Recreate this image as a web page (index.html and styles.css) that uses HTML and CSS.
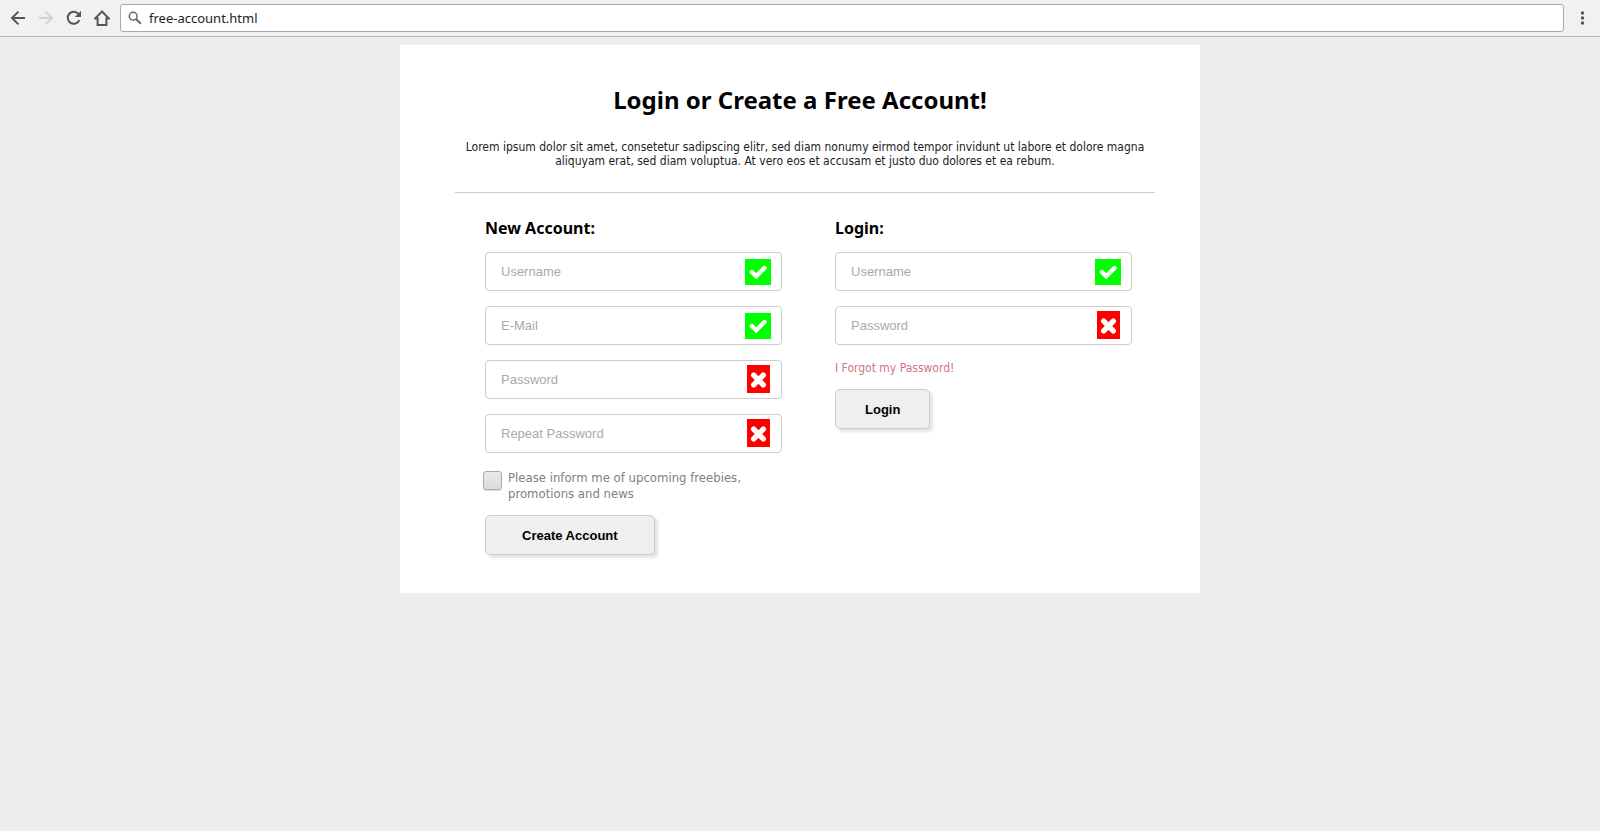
FILE: index.html
```html
<!DOCTYPE html>
<html lang="en">
<head>
<meta charset="utf-8">
<title>free-account.html</title>
<link rel="stylesheet" href="styles.css">
</head>
<body>
<svg class="symbols" aria-hidden="true">
  <symbol id="check" viewBox="0 0 26 26"><path d="M6.800 13 11.200 17.200 19.500 9" fill="none" stroke="#fff" stroke-width="4.400" stroke-linecap="round"/></symbol>
  <symbol id="cross" viewBox="0 0 23 28"><path d="M6.700 10.200 16.300 19.800M16.300 10.200 6.700 19.800" fill="none" stroke="#fff" stroke-width="5.400" stroke-linecap="round"/></symbol>
</svg>
<header class="toolbar">
  <nav class="toolbar-nav" aria-label="Browser">
    <button class="tool" type="button" aria-label="Back"><svg viewBox="0 0 16 16"><path d="M15 8H2.4M8.4 1.6 2 8l6.400 6.400"/></svg></button>
    <button class="tool tool-off" type="button" aria-label="Forward"><svg viewBox="0 0 16 16"><path d="M1 8h12.600M7.600 1.600 14 8l-6.400 6.400"/></svg></button>
    <button class="tool" type="button" aria-label="Reload"><svg viewBox="0 0 16 16"><path d="M13.300 10.100A6 6 0 1 1 12.400 3.900"/><path class="solid" d="M15 .8V7H8.800Z"/></svg></button>
    <button class="tool" type="button" aria-label="Home"><svg viewBox="0 0 16 16"><path d="M8 1.500 1.300 8.400H3.600V15h8.800V8.400h2.300Z"/></svg></button>
  </nav>
  <label class="address">
    <svg class="search" viewBox="0 0 14 14"><circle cx="5.200" cy="5.200" r="3.900"/><path d="m8.200 8.200 4.600 4.600"/></svg>
    <input class="address-input" type="text" value="free-account.html" aria-label="Address">
  </label>
  <button class="tool menu" type="button" aria-label="Menu"><svg viewBox="0 0 16 16"><circle class="solid" cx="8.500" cy="3" r="1.700"/><circle class="solid" cx="8.500" cy="8" r="1.700"/><circle class="solid" cx="8.500" cy="13" r="1.700"/></svg></button>
</header>
<main class="card">
  <h1 class="title">Login or Create a Free Account!</h1>
  <p class="intro">Lorem ipsum dolor sit amet, consetetur sadipscing elitr, sed diam nonumy eirmod tempor invidunt ut labore et dolore magna aliquyam erat, sed diam voluptua. At vero eos et accusam et justo duo dolores et ea rebum.</p>
  <div class="columns">
    <form class="column">
      <h2 class="heading">New Account:</h2>
      <label class="field"><input class="field-input" type="text" placeholder="Username" aria-label="Username"><svg class="mark mark-ok"><use href="#check"/></svg></label>
      <label class="field"><input class="field-input" type="email" placeholder="E-Mail" aria-label="E-Mail"><svg class="mark mark-ok"><use href="#check"/></svg></label>
      <label class="field"><input class="field-input" type="password" placeholder="Password" aria-label="Password"><svg class="mark mark-bad"><use href="#cross"/></svg></label>
      <label class="field"><input class="field-input" type="password" placeholder="Repeat Password" aria-label="Repeat Password"><svg class="mark mark-bad"><use href="#cross"/></svg></label>
      <label class="inform"><input class="tick" type="checkbox"><span>Please inform me of upcoming freebies, promotions and news</span></label>
      <button class="button button-wide" type="button">Create Account</button>
    </form>
    <form class="column">
      <h2 class="heading">Login:</h2>
      <label class="field"><input class="field-input" type="text" placeholder="Username" aria-label="Username"><svg class="mark mark-ok"><use href="#check"/></svg></label>
      <label class="field"><input class="field-input" type="password" placeholder="Password" aria-label="Password"><svg class="mark mark-bad"><use href="#cross"/></svg></label>
      <a class="forgot" href="#">I Forgot my Password!</a>
      <button class="button" type="button">Login</button>
    </form>
  </div>
</main>
</body>
</html>
```
FILE: styles.css
```css
* { box-sizing: border-box; }
body { margin: 0; background: #ededed; color: #000; font-family: "DejaVu Sans Condensed", "DejaVu Sans", sans-serif; font-size: 12px; }
.symbols { display: none; }

.toolbar { display: flex; align-items: center; gap: 8px; height: 37px; padding: 0 8px; background: #f1f1f1; border-bottom: 1px solid #b3b3b3; }
.toolbar-nav { display: flex; gap: 8px; }
.tool { display: flex; align-items: center; justify-content: center; width: 20px; height: 20px; padding: 0; border: 0; background: none; }
.tool svg { width: 16px; height: 16px; fill: none; stroke: #555; stroke-width: 2; }
.tool .solid { fill: #555; stroke: none; }
.tool-off svg { stroke: #d2d2d2; }
.address { flex: 1; display: flex; align-items: center; gap: 7px; height: 28px; padding: 0 7px; background: #fff; border: 1px solid #a9a9a9; border-radius: 3px; }
.search { width: 14px; height: 14px; fill: none; stroke: #666; stroke-width: 2; }
.search circle { stroke-width: 1.5; }
.address-input { flex: 1; padding: 0; border: 0; outline: 0; background: none; color: #222; font: 13px "Noto Sans", sans-serif; }

.card { max-width: 800px; margin: 8px auto; padding: 37px 45px 38px 55px; background: #fff; }
.title { margin: 0; font-family: "Noto Sans", sans-serif; font-size: 24px; line-height: 36px; text-align: center; padding-right: 10px; }
.intro { margin: 0; padding: 22px 0 24px; border-bottom: 1px solid #ccc; line-height: 14px; text-align: center; color: #222; }
.columns { display: grid; grid-template-columns: 1fr 1fr; padding-top: 23px; }
.column { display: flex; flex-direction: column; align-items: flex-start; padding: 0 23px 0 30px; }
.heading { margin: 0 0 12px; font-family: "Noto Sans", sans-serif; font-size: 16px; line-height: 24px; }
.field { display: flex; align-items: center; width: 100%; height: 39px; margin-bottom: 15px; padding: 0 10px 0 15px; border: 1px solid #ccc; border-radius: 4px; background: #fff; }
.field-input { flex: 1; min-width: 0; padding: 0; border: 0; outline: 0; background: none; font: 13px "Liberation Sans", Arial, sans-serif; }
.field-input::placeholder { color: #a9a9a9; opacity: 1; }
.mark { flex: none; }
.mark-ok { width: 26px; height: 26px; background: #0f0; }
.mark-bad { width: 23px; height: 28px; margin: 0 1px 2px 0; background: #f00; }
.inform { display: flex; gap: 6px; margin: 2px 0 13px -2px; color: #808080; font-size: 13px; line-height: 16px; max-width: 270px; }
.tick { flex: none; appearance: none; width: 19px; height: 19px; margin: 1px 0 0; border: 1px solid #aaa; border-radius: 3px; background: linear-gradient(#e9e9e9, #dcdcdc); box-shadow: 0 1px 1px #ddd; }
.forgot { color: #d07580; line-height: 16px; margin-bottom: 13px; text-decoration: none; }
.button { height: 40px; padding: 0 29px; border: 1px solid #ccc; border-radius: 5px; background: #efefef; box-shadow: 3px 3px 3px #e3e3e3; color: #000; font: bold 13px "Liberation Sans", Arial, sans-serif; }
.button-wide { padding: 0 36px; }
```
